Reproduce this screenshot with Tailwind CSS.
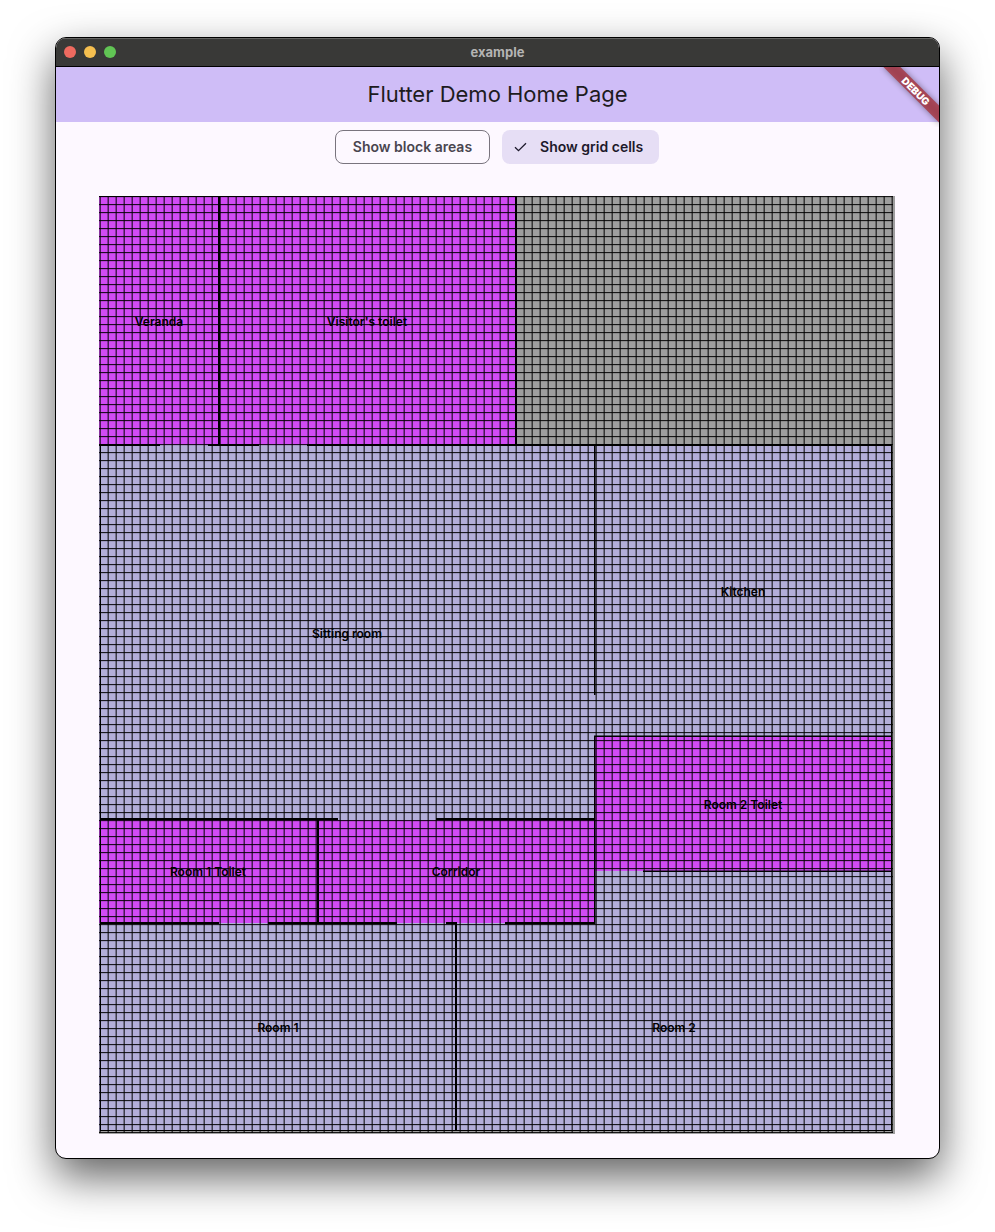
<!DOCTYPE html>
<html lang="en">
<head>
<meta charset="utf-8">
<meta name="viewport" content="width=device-width, initial-scale=1">
<title>example</title>
<script src="https://cdn.jsdelivr.net/npm/@tailwindcss/browser@4"></script>
</head>
<body class="bg-white font-['Inter',sans-serif]">
<div class="px-[55px] pt-[37px] pb-[73px]">
  <div class="overflow-hidden rounded-[11px] border border-black bg-[#fdf8ff] shadow-[0_18px_44px_rgba(0,0,0,0.62)]">
    <header class="box-content flex h-7 items-center border-b border-black bg-[#393937] px-2 shadow-[inset_0_1px_0_#666664]">
      <div class="flex gap-2">
        <button aria-label="Close" class="size-3 rounded-full bg-[#ee6a5f]"></button>
        <button aria-label="Minimize" class="size-3 rounded-full bg-[#f5bf4f]"></button>
        <button aria-label="Zoom" class="size-3 rounded-full bg-[#61c554]"></button>
      </div>
      <span class="flex-1 pr-[52px] text-center text-[13px] leading-4 font-bold text-[#b4b4b3]">example</span>
    </header>
    <div class="relative flex h-[55px] items-start justify-center bg-[#cfbdf7] pt-[13px]">
      <h1 class="text-[22px] leading-7 text-[#1d1b20]">Flutter Demo Home Page</h1>
      <svg class="absolute top-0 right-0 h-[60px] w-[60px]" viewBox="0 0 60 60" role="img" aria-label="Debug build">
        <defs><filter id="soft" x="-20%" y="-80%" width="140%" height="260%"><feGaussianBlur stdDeviation="3"/></filter></defs>
        <g transform="translate(61 0) rotate(45)">
          <rect x="-40" y="28" width="80" height="12" fill="#000" fill-opacity="0.4" filter="url(#soft)"/>
          <rect x="-42" y="28" width="84" height="12" fill="#a83440" fill-opacity="0.8"/>
          <text x="0" y="38" text-anchor="middle" font-size="10" font-weight="900" fill="#fff">DEBUG</text>
        </g>
      </svg>
    </div>
    <main class="pt-2 pr-11 pb-6 pl-[43px]">
      <div class="flex justify-center gap-3">
        <button aria-pressed="false" class="h-[34px] rounded-lg border border-[#79747e] px-[17px] text-sm font-semibold text-[#49454f]">Show block areas</button>
        <button aria-pressed="true" class="flex h-[34px] items-center gap-3 rounded-lg bg-[#e6def5] pr-4 pl-3 text-sm font-semibold text-[#1d192b]">
          <svg class="h-3.5 w-3.5" viewBox="0 0 14 14" fill="none" stroke="currentColor" stroke-width="1.3"><path d="M1 7.2 L4.5 10.7 L12 3.2"/></svg>
          Show grid cells
        </button>
      </div>
      <svg class="mt-8 block h-auto w-full" viewBox="0 0 796 938" role="img" aria-label="Floor plan">
        <defs>
          <pattern id="cells" width="8" height="8" patternUnits="userSpaceOnUse">
            <path d="M0 1.5H8" stroke="#000" stroke-opacity="0.12"/>
            <path d="M0.5 0V8" stroke="#000" stroke-opacity="0.35"/>
            <path d="M1.5 0V8" stroke="#000" stroke-opacity="0.65"/>
            <path d="M0 0.5H8" stroke="#000" stroke-opacity="0.85"/>
          </pattern>
        </defs>
        <g shape-rendering="crispEdges">
          <path fill="#9e9e9e" d="M0 0H796V938H0Z"/>
          <path fill="#b3aed9" d="M0 249H793V935H0Z"/>
          <g fill="#d14bf5">
            <path d="M0 0H417V249H0Z"/>
            <path d="M0 624H496V727H0Z"/>
            <path d="M496 540H793V675H496Z"/>
          </g>
          <path fill="url(#cells)" d="M0 0H794V937H0Z"/>
          <g stroke="#000">
            <path d="M0 0.5H418M1.5 249V935M495.5 249V499M495 540.5H793M495.5 540V728M544 675.5H793M792.5 249V935M1 934.5H793"/>
            <path stroke-opacity="0.5" d="M496.5 249V499M495 539.5H793M496.5 540V728M544 674.5H793"/>
            <path stroke-width="2" d="M120 0V249M417 0V249M0 249H61M109 249H160M208 249H793M1 623H239M337 623H496M219 623V727M1 727H120M169 727H298M347 727H358M406 727H496M357 727V935"/>
          </g>
        </g>
        <g font-size="12" font-weight="600" text-anchor="middle" fill="#000">
          <text x="60" y="130">Veranda</text>
          <text x="268" y="130">Visitor's toilet</text>
          <text x="248" y="442">Sitting room</text>
          <text x="644" y="400">Kitchen</text>
          <text x="644" y="613">Room 2 Toilet</text>
          <text x="109" y="680">Room 1 Toilet</text>
          <text x="357" y="680">Corridor</text>
          <text x="179" y="836">Room 1</text>
          <text x="575" y="836">Room 2</text>
        </g>
      </svg>
    </main>
  </div>
</div>
</body>
</html>
